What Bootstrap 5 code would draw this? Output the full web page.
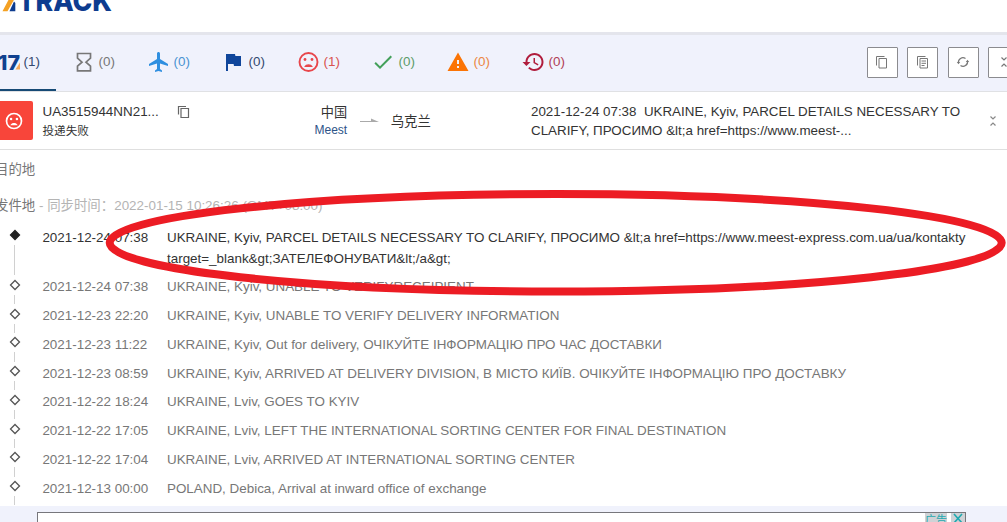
<!DOCTYPE html>
<html lang="zh-CN">
<head>
  <meta charset="UTF-8">
  <meta name="viewport" content="width=device-width, initial-scale=1.0">
  <title>17TRACK</title>
  <link href="https://cdn.jsdelivr.net/npm/bootstrap@5.3.0/dist/css/bootstrap.min.css" rel="stylesheet">
  <style>
    body {
      height: 522px;
      font-family: "Liberation Sans", "Noto Sans CJK SC", sans-serif;
      font-size: 13.42px;
      line-height: 21px;
      color: #333;
      background: #f0f2fc;
    }

    svg {
      display: block;
      flex: none;
    }

    /* Header */
    .site-header {
      height: 32px;
    }

    .brand-logo text {
      font-family: Inter, sans-serif;
      font-weight: 800;
      font-size: 29px;
      fill: #0d3c8f;
    }

    /* Status tabs */
    .status-bar {
      height: 60px;
      border-top: 3px solid #e4e5ec;
      border-bottom: 1px solid #e0e1e4;
    }

    .status-tabs {
      margin-left: -19px;
    }

    .status-tab {
      width: 75px;
      gap: 2.5px;
      padding-bottom: 1px;
      border-bottom: 2px solid transparent;
    }

    .status-tab.current {
      border-color: #164a75;
    }

    .tab-all, .tab-pickup { color: #33496f; }
    .tab-none { color: #777; }
    .tab-transit { color: #4a93d2; }
    .tab-failed { color: #d9534f; }
    .tab-done { color: #5d9c69; }
    .tab-alert { color: #ec8743; }
    .tab-expired { color: #b04055; }

    .seventeen {
      font-family: Inter, sans-serif;
      font-weight: 800;
      font-size: 20.5px;
    }

    .tool-btn {
      width: 31px;
      height: 31px;
      border: 1px solid #8b8b8f;
      border-radius: 1px;
    }

    .tool-list {
      gap: 9.4px;
      margin-right: -12px;
      margin-top: -2px;
    }

    /* Parcel row */
    .parcel-row {
      height: 58px;
      line-height: 19px;
      border-bottom: 1px solid #dfdfdf;
    }

    .state-tile {
      width: 33px;
      height: 39px;
      padding-right: 6px;
      margin-right: 9.5px;
      border-radius: 0 2px 2px 0;
      background: #f8453a;
    }

    .parcel-no {
      width: 124px;
    }

    .state-name {
      font-size: 11.6px;
    }

    .parcel-copy {
      width: 138px;
      margin-left: 10px;
      height: 38px;
      padding-top: 3px;
    }

    .route {
      width: 216.5px;
    }

    .country {
      font-size: 13.2px;
    }

    .carrier {
      font-size: 12px;
      color: #2d5488;
    }

    .route-arrow {
      margin: 0 11px 0 12.5px;
    }

    .last-event {
      width: 445px;
      font-size: 13.36px;
    }

    .cjk-text {
      font-family: "Noto Sans CJK SC", sans-serif;
      font-weight: 400;
    }

    /* Tracking details */
    .details {
      padding-top: 7.5px;
    }

    .place-head {
      margin-left: -5px;
      color: #777;
      height: 36.7px;
    }

    .place-head.origin {
      height: 32.5px;
    }

    .sync-time {
      font-family: "Liberation Sans", "Noto Sans CJK SC", sans-serif;
      color: #b4b4b4;
    }

    .event-row {
      height: 28.75px;
      color: #777;
    }

    .event-row.latest {
      height: 49.75px;
      color: #333;
    }

    .event-mark {
      width: 29px;
      margin-right: 13.4px;
      padding-top: 2.5px;
    }

    .event-mark path {
      fill: none;
      stroke: #555;
      stroke-width: 1.3;
    }

    .latest .event-mark path {
      fill: #222;
      stroke: #222;
    }

    .event-mark::after {
      content: "";
      flex: 1;
      width: 1px;
      margin: 4px 0 1px;
      background: #d0d0d0;
    }

    .event-date {
      width: 124.6px;
    }

    /* Ad */
    .ad-box {
      width: 929px;
      height: 10px;
      margin: 5.5px 0 0 37px;
      border: solid #77777c;
      border-width: 1px 1px 0;
      overflow: hidden;
    }

    .ad-tag {
      height: 12px;
      font-size: 11px;
      line-height: 12px;
      color: #1fa9b0;
      background: #cfd2d6;
    }

    .red-ring {
      position: absolute;
      top: 0;
      left: 0;
      pointer-events: none;
    }
  </style>
</head>
<body class="overflow-hidden position-relative">

  <header class="site-header bg-white overflow-hidden">
    <svg class="brand-logo" width="120" height="32">
      <path d="M2.500 11.300L9.500-2H15L7.500 11.300z" fill="#f4a123"/>
      <path d="M9.500 11.300L14 1.500 15.300 3V11.300z" fill="#0d3c8f"/>
      <text x="17.500" y="11.300" textLength="94.500" lengthAdjust="spacingAndGlyphs">TRACK</text>
    </svg>
  </header>

  <!-- Status filter -->
  <div class="status-bar d-flex justify-content-between">
    <div class="status-tabs d-flex">
      <div class="status-tab tab-all current d-flex align-items-center justify-content-center">
        <svg width="24" height="24" viewBox="0 0 24 24">
          <text class="seventeen" x="1" y="19.500" textLength="22" lengthAdjust="spacingAndGlyphs" fill="#10418f">17</text>
          <path d="M23 12.500v7h-4.500z" fill="#f4a95a"/>
        </svg>
        <span>(1)</span>
      </div>
      <div class="status-tab tab-none d-flex align-items-center justify-content-center">
        <svg width="24" height="24" viewBox="0 0 24 24" fill="none" stroke="#777" stroke-width="1.700">
          <path d="M5.500 3.500h13v4.700L14 12.200l4.500 4v4.600h-13v-4.600l4.500-4-4.500-4z"/>
        </svg>
        <span>(0)</span>
      </div>
      <div class="status-tab tab-transit d-flex align-items-center justify-content-center">
        <svg width="24" height="24" viewBox="0 0 24 24" fill="#2f8fe0">
          <path d="M21 16v-2l-8-5V3.500c0-.83-.67-1.500-1.500-1.500S10 2.670 10 3.500V9l-8 5v2l8-2.500V19l-2 1.500V22l3.500-1 3.500 1v-1.500L13 19v-5.500l8 2.500z"/>
        </svg>
        <span>(0)</span>
      </div>
      <div class="status-tab tab-pickup d-flex align-items-center justify-content-center">
        <svg width="24" height="24" viewBox="0 0 24 24" fill="#10469b">
          <path d="M13.400 6L13 4H4v17h2v-7h5.600l.4 2h7V6z"/>
        </svg>
        <span>(0)</span>
      </div>
      <div class="status-tab tab-failed d-flex align-items-center justify-content-center">
        <svg width="24" height="24" viewBox="0 0 24 24" fill="none" stroke="#e8464b" stroke-width="1.900">
          <circle cx="11.500" cy="12" r="9"/>
          <path d="M7.100 17c1-2 2.600-2.700 4.400-2.700s3.400.7 4.400 2.700z" fill="#e8464b" stroke="none"/>
          <circle cx="8" cy="9.500" r="1.400" fill="#e8464b" stroke="none"/>
          <circle cx="15" cy="9.500" r="1.400" fill="#e8464b" stroke="none"/>
        </svg>
        <span>(1)</span>
      </div>
      <div class="status-tab tab-done d-flex align-items-center justify-content-center">
        <svg width="24" height="24" viewBox="0 0 24 24" fill="#43a05a">
          <path d="M8 16.170L3.830 12l-1.420 1.410L8 19 20 7l-1.410-1.410z"/>
        </svg>
        <span>(0)</span>
      </div>
      <div class="status-tab tab-alert d-flex align-items-center justify-content-center">
        <svg width="24" height="24" viewBox="0 0 24 24" fill="#fb7405">
          <path d="M.5 21h21L11 2.500.5 21zm11.500-3h-2v-2h2v2zm0-4h-2v-4h2v4z"/>
        </svg>
        <span>(0)</span>
      </div>
      <div class="status-tab tab-expired d-flex align-items-center justify-content-center">
        <svg width="24" height="24" viewBox="0.5 0 24 24" fill="#b01c3c">
          <path d="M13 3c-4.970 0-9 4.030-9 9H1l3.890 3.890.07.14L9 12H6c0-3.870 3.130-7 7-7s7 3.130 7 7-3.130 7-7 7c-1.930 0-3.680-.79-4.940-2.060l-1.420 1.420C8.270 19.990 10.510 21 13 21c4.970 0 9-4.030 9-9s-4.030-9-9-9zm-1 5v5l4.280 2.540.72-1.210-3.500-2.080V8H12z"/>
        </svg>
        <span>(0)</span>
      </div>
    </div>

    <div class="tool-list d-flex align-items-center">
      <div class="tool-btn bg-white d-flex align-items-center justify-content-center">
        <svg width="14" height="14" viewBox="0 0 14 14" fill="none" stroke="#777">
          <path d="M1.500 10.500v-9h8M4 3.500h7.500v9.500H4z"/>
        </svg>
      </div>
      <div class="tool-btn bg-white d-flex align-items-center justify-content-center">
        <svg width="14" height="14" viewBox="0 0 14 14" fill="none" stroke="#777">
          <path d="M1.500 10.500v-9h8M4 3.500h7.500v9.500H4zM5.500 6h4.500M5.500 8.300h4.500M5.500 10.500h3"/>
        </svg>
      </div>
      <div class="tool-btn bg-white d-flex align-items-center justify-content-center">
        <svg width="14" height="14" viewBox="0 0 14 14" fill="none" stroke="#777" stroke-width="1.200">
          <path d="M2.500 8A4.500 4.500 0 0 1 9.500 3.500M11.500 6A4.500 4.500 0 0 1 4.500 10.500"/>
          <path d="M.8 7h3.400L2.500 9.200zM9.800 7h3.400L11.500 4.800z" fill="#777" stroke="none"/>
        </svg>
      </div>
      <div class="tool-btn bg-white d-flex align-items-center justify-content-center">
        <svg width="8" height="12" viewBox="0 0 8 12" fill="none" stroke="#777" stroke-width="1.200">
          <path d="M1.500 1.500L4 4l2.500-2.500M1.500 10.500L4 8l2.500 2.500"/>
        </svg>
      </div>
    </div>
  </div>

  <!-- Parcel summary -->
  <div class="parcel-row bg-white d-flex align-items-center">
    <div class="state-tile d-flex align-items-center justify-content-center">
      <svg width="20" height="20" viewBox="0 0 24 24" fill="none" stroke="#fff" stroke-width="2">
        <circle cx="12" cy="12" r="9"/>
        <path d="M7.600 17c1-2 2.600-2.700 4.400-2.700s3.400.7 4.400 2.700z" fill="#fff" stroke="none"/>
        <circle cx="8.500" cy="9.700" r="1.500" fill="#fff" stroke="none"/>
        <circle cx="15.500" cy="9.700" r="1.500" fill="#fff" stroke="none"/>
      </svg>
    </div>
    <div class="parcel-no">
      <div>UA3515944NN21...</div>
      <div class="cjk-text state-name">投递失败</div>
    </div>
    <div class="parcel-copy">
      <svg width="14" height="14" viewBox="0 0 14 14" fill="none" stroke="#666" stroke-width="1.200">
        <path d="M1.500 9.500v-8h7.500M4 3.500h7.500v9H4z"/>
      </svg>
    </div>
    <div class="route d-flex align-items-center">
      <div class="text-end">
        <div class="cjk-text country">中国</div>
        <div class="carrier">Meest</div>
      </div>
      <svg class="route-arrow" width="20" height="8" viewBox="0 0 20 8" fill="#aaa">
        <path d="M0 4h11V1.500L19 5H0z"/>
      </svg>
      <div class="cjk-text">乌克兰</div>
    </div>
    <div class="last-event">
      2021-12-24 07:38&nbsp; UKRAINE, Kyiv, PARCEL DETAILS NECESSARY TO<br>CLARIFY, ПРОСИМО &amp;lt;a href=https://www.meest-...
    </div>
    <svg class="ms-auto me-2" width="12" height="12" viewBox="-2 0 12 12" fill="none" stroke="#888" stroke-width="1.200">
      <path d="M1.500 1.500L4 4l2.500-2.500M1.500 10.500L4 8l2.500 2.500"/>
    </svg>
  </div>

  <!-- Tracking details -->
  <div class="details bg-white">
    <div class="place-head cjk-text">目的地</div>
    <div class="place-head origin cjk-text">发件地<span class="sync-time"> - 同步时间：2022-01-15 10:26:26 (GMT+08:00)</span></div>

    <div id="event-list"></div>
  </div>

  <div class="ad-box bg-white d-flex justify-content-end">
    <div class="ad-tag cjk-text me-1">广告</div>
    <div class="ad-tag">
      <svg width="14" height="12" viewBox="0 0 14 12" stroke="#1fa9b0" stroke-width="1.600">
        <path d="M3 1l8 9M11 1l-8 9"/>
      </svg>
    </div>
  </div>

  <svg class="red-ring" width="1007" height="522">
    <ellipse cx="555.700" cy="242.800" rx="446" ry="48.700" fill="none" stroke="#ec1c24" stroke-width="8"/>
  </svg>

  <script src="https://cdn.jsdelivr.net/npm/bootstrap@5.3.0/dist/js/bootstrap.bundle.min.js"></script>
  <script>
    const events = [
      ["2021-12-24 07:38", "UKRAINE, Kyiv, PARCEL DETAILS NECESSARY TO CLARIFY, ПРОСИМО &amp;lt;a href=https://www.meest-express.com.ua/ua/kontakty<br>target=_blank&amp;gt;ЗАТЕЛЕФОНУВАТИ&amp;lt;/a&amp;gt;"],
      ["2021-12-24 07:38", "UKRAINE, Kyiv, UNABLE TO VERIFYRECEIPIENT"],
      ["2021-12-23 22:20", "UKRAINE, Kyiv, UNABLE TO VERIFY DELIVERY INFORMATION"],
      ["2021-12-23 11:22", "UKRAINE, Kyiv, Out for delivery, ОЧІКУЙТЕ ІНФОРМАЦІЮ ПРО ЧАС ДОСТАВКИ"],
      ["2021-12-23 08:59", "UKRAINE, Kyiv, ARRIVED AT DELIVERY DIVISION, В МІСТО КИЇВ. ОЧІКУЙТЕ ІНФОРМАЦІЮ ПРО ДОСТАВКУ"],
      ["2021-12-22 18:24", "UKRAINE, Lviv, GOES TO KYIV"],
      ["2021-12-22 17:05", "UKRAINE, Lviv, LEFT THE INTERNATIONAL SORTING CENTER FOR FINAL DESTINATION"],
      ["2021-12-22 17:04", "UKRAINE, Lviv, ARRIVED AT INTERNATIONAL SORTING CENTER"],
      ["2021-12-13 00:00", "POLAND, Debica, Arrival at inward office of exchange"]
    ];

    document.getElementById("event-list").innerHTML = events.map(([date, text], i) => `
      <div class="event-row d-flex ${i === 0 ? "latest" : ""}">
        <div class="event-mark d-flex flex-column align-items-center">
          <svg width="12" height="12" viewBox="0 0 12 12">
            <path d="M6 1.500L10.500 6 6 10.500 1.500 6z"/>
          </svg>
        </div>
        <div class="event-date">${date}</div>
        <div class="text-nowrap">${text}</div>
      </div>`).join("");
  </script>
</body>
</html>
